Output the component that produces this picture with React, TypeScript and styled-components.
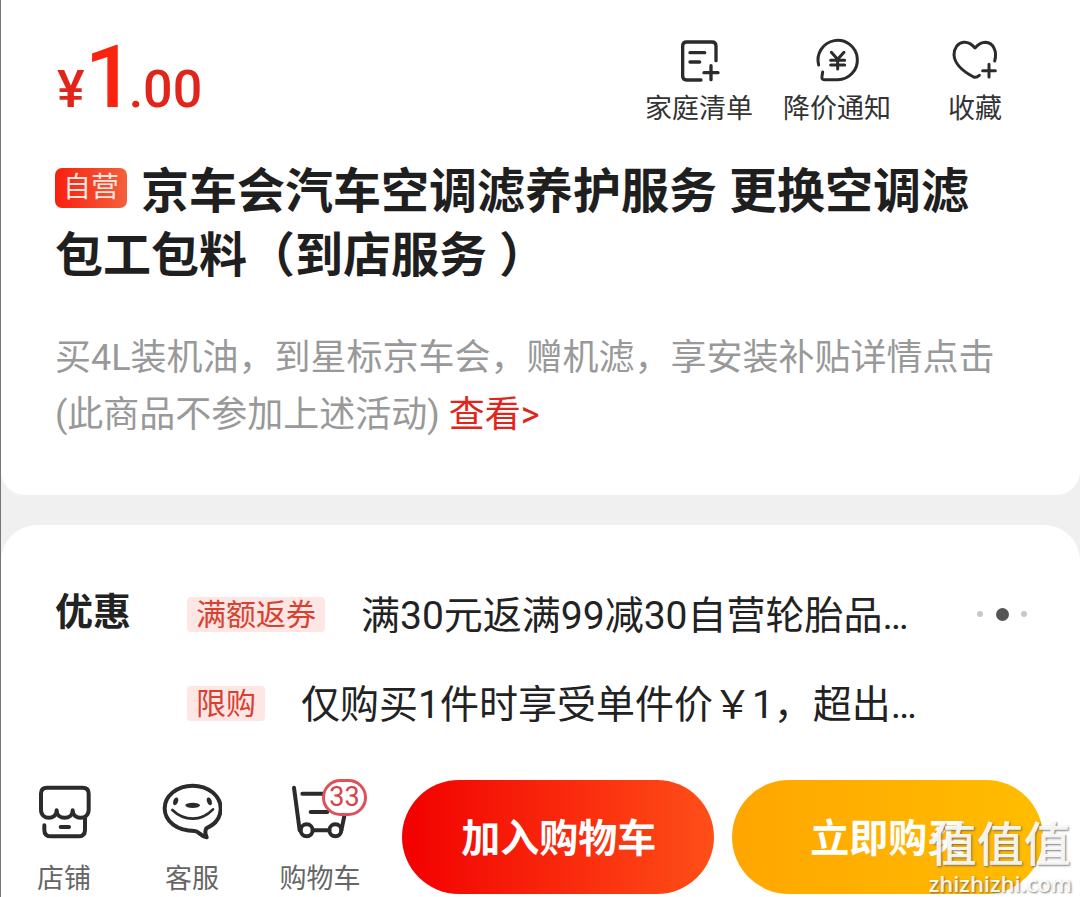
import React from "react";
import styled, { createGlobalStyle } from "styled-components";

const GlobalStyle = createGlobalStyle`
  * { box-sizing: border-box; }
  body {
    margin: 0;
    background: #f0f0f0;
    color: #222;
    font-family: Roboto, "Noto Sans CJK SC", sans-serif;
  }
  button { font-family: inherit; border: 0; padding: 0; cursor: pointer; }
`;

const Page = styled.div`
  position: relative;
  display: flex;
  flex-direction: column;
  gap: 30px;
  border-left: 1px solid #777;
`;

const ProductCard = styled.section`
  padding: 33px 36px 51px 54px;
  background: #fff;
  border-radius: 0 0 24px 24px;
`;

const CardHeader = styled.header`
  display: flex;
  justify-content: space-between;
  align-items: flex-start;
  height: 94px;
`;

const Price = styled.div`
  padding-left: 2px;
  color: #e1251b;
  font-size: 52px;
  font-weight: 500;
  line-height: 88px;
  white-space: nowrap;
`;

const PriceWhole = styled.strong`
  margin-right: -6px;
  color: #fa230f;
  font-size: 88px;
  font-weight: 500;
`;

const Actions = styled.div`
  display: flex;
  padding-top: 4px;
`;

const Action = styled.button`
  display: flex;
  flex-direction: column;
  align-items: center;
  gap: 6px;
  width: 138px;
  background: none;
  color: #333;
  font-size: 27px;
  line-height: 36px;
  white-space: nowrap;
`;

const LineIcon = styled.svg<{ $size: number }>`
  display: block;
  width: ${(p) => p.$size}px;
  height: ${(p) => p.$size}px;
  fill: none;
  stroke: #2b2b2b;
  stroke-linecap: round;
  stroke-linejoin: round;
`;

const Title = styled.h1`
  margin: 33px 0 0;
  color: #1f1f1f;
  font-size: 48px;
  font-weight: 700;
  line-height: 64px;
`;

const SelfTag = styled.span`
  display: inline-flex;
  align-items: center;
  justify-content: center;
  width: 72px;
  height: 40px;
  margin-right: 14px;
  border-radius: 7px;
  background: linear-gradient(90deg, #f8200f, #f5603c);
  color: #ffe6e0;
  font-size: 28px;
  font-weight: 400;
  line-height: 40px;
  vertical-align: 11px;
`;

const Subtitle = styled.p`
  margin: 42px 18px 0 0;
  color: #999;
  font-size: 36px;
  line-height: 57px;
`;

const MoreLink = styled.a`
  color: #e1251b;
  text-decoration: none;
`;

const PromoCard = styled.section`
  background: #fff;
  border-radius: 36px 36px 0 0;
`;

const Promotions = styled.div`
  display: flex;
  align-items: flex-start;
  padding: 61px 53px 0 54px;
`;

const PromoHeading = styled.h2`
  flex: none;
  width: 132px;
  margin: 0;
  font-size: 38px;
  font-weight: 700;
  line-height: 52px;
`;

const PromoList = styled.ul`
  display: flex;
  flex: 1;
  flex-direction: column;
  gap: 33px;
  margin: 0;
  padding: 0;
  list-style: none;
`;

const PromoRow = styled.li`
  display: flex;
  align-items: center;
  gap: 36px;
  height: 56px;
  font-size: 39px;
  line-height: 52px;
  white-space: nowrap;
`;

const PromoTag = styled.span`
  padding: 0 9px;
  border-radius: 4px;
  background: #fde6e4;
  color: #d9402f;
  font-size: 30px;
  line-height: 35px;
`;

const PromoText = styled.span`
  padding-top: 3px;
`;

const MoreButton = styled.button`
  display: flex;
  align-items: center;
  justify-content: space-between;
  width: 50px;
  height: 56px;
  background: none;
`;

const Dot = styled.span<{ $active?: boolean }>`
  width: ${(p) => (p.$active ? 13 : 6)}px;
  height: ${(p) => (p.$active ? 13 : 6)}px;
  border-radius: 50%;
  background: ${(p) => (p.$active ? "#555" : "#c8c8c8")};
`;

const BottomBar = styled.footer`
  display: flex;
  align-items: flex-start;
  padding: 49px 37px 2px 0;
`;

const Nav = styled.nav`
  display: flex;
  flex: none;
`;

const NavItem = styled.a`
  display: flex;
  flex-direction: column;
  align-items: center;
  gap: 20px;
  width: 128px;
  padding: 1px 2px 0 0;
  color: #666;
  font-size: 27px;
  line-height: 36px;
  text-decoration: none;
`;

const IconBox = styled.span`
  position: relative;
`;

const Badge = styled.span`
  position: absolute;
  left: 32px;
  top: -2px;
  width: 45px;
  height: 37px;
  border: 3px solid #e0505a;
  border-radius: 19px;
  background: #fff;
  color: #d8434b;
  font-size: 27px;
  line-height: 31px;
  text-align: center;
`;

const BuyButtons = styled.div`
  display: flex;
  flex: 1;
  gap: 18px;
  padding-left: 17px;
`;

const BuyButton = styled.button<{ $from: string; $to: string }>`
  flex: 1;
  height: 114px;
  padding: 0 0 5px 2px;
  border-radius: 57px;
  background: linear-gradient(90deg, ${(p) => p.$from}, ${(p) => p.$to});
  color: #fff;
  font-size: 39px;
  font-weight: 700;
`;

const Watermark = styled.div`
  position: absolute;
  right: 8px;
  bottom: 3px;
  color: rgba(255, 255, 255, 0.92);
  text-align: center;
  text-shadow: 1px 1px 2px rgba(90, 90, 90, 0.8);
  pointer-events: none;
`;

const WatermarkName = styled.div`
  font-size: 47px;
  font-weight: 500;
  line-height: 50px;
`;

const WatermarkSite = styled.div`
  font-family: "Open Sans", sans-serif;
  font-size: 22px;
  font-weight: 600;
  line-height: 26px;
`;

const ListIcon = () => (
  <LineIcon $size={48} viewBox="0 0 144 144" strokeWidth={10} aria-hidden>
    <path d="M123 71V27q0-12-12-12H35q-12 0-12 12v90q0 12 12 12h43" />
    <path d="M45 47h44M45 75h29M108 86v42M87 107h42" />
  </LineIcon>
);

const PriceAlertIcon = () => (
  <LineIcon $size={48} viewBox="0 0 144 144" strokeWidth={9} aria-hidden>
    <path d="M17 84A59 59 0 1 1 74 128H34q-9 0-7-10l2-13" />
    <path d="M55 46l19 21 19-21M74 67v29M53 70h42M53 84h42" />
  </LineIcon>
);

const HeartIcon = () => (
  <LineIcon $size={48} viewBox="0 0 144 144" strokeWidth={9} aria-hidden>
    <path d="M131 72C139 44 128 17 103 16 88 16 80 24 72 33 62 21 50 15 38 16 20 18 9 34 9 54c2 30 36 54 59 66q8 3 17-5" />
    <path d="M114 82v38M95 101h38" />
  </LineIcon>
);

const ShopIcon = () => (
  <LineIcon $size={60} viewBox="0 0 180 180" strokeWidth={12} aria-hidden>
    <path d="M21 86V38q0-18 18-18h107q18 0 18 18v48c0 32-48 32-48 2 0 30-48 30-48 0 0 30-47 30-47-2z" />
    <path d="M153 108v38q0 20-20 20H51q-20 0-20-20v-13" />
    <path d="M80 138h25" />
  </LineIcon>
);

const ServiceIcon = () => (
  <LineIcon $size={60} viewBox="0 0 180 180" strokeWidth={12} aria-hidden>
    <path d="M133 142c27-12 43-34 43-60 0-38-38-68-84-68S8 44 8 82c0 40 38 68 90 68 12 0 18 16 36 19-4-9-6-19-1-27z" />
    <path d="M31 87q27 26 61 26t61-28" strokeWidth={8} />
    <g fill="#2b2b2b" stroke="none">
      <ellipse cx="41" cy="61" rx="7" ry="12" transform="rotate(18 41 61)" />
      <ellipse cx="142" cy="61" rx="7" ry="12" transform="rotate(-18 142 61)" />
      <ellipse cx="92" cy="73" rx="22" ry="8" />
    </g>
  </LineIcon>
);

const CartIcon = () => (
  <LineIcon $size={60} viewBox="0 0 180 180" strokeWidth={12} aria-hidden>
    <path d="M12 20l17 128M68 148h50M37 38h65M62 93h50M163 105l-9 43" />
    <circle cx="50" cy="148" r="18" />
    <circle cx="136" cy="148" r="18" />
  </LineIcon>
);

const promos = [
  { tag: "满额返券", text: "满30元返满99减30自营轮胎品…" },
  { tag: "限购", text: "仅购买1件时享受单件价￥1，超出…" },
];

export default function App() {
  return (
    <>
      <GlobalStyle />
      <Page>
        <ProductCard>
          <CardHeader>
            <Price>
              ¥<PriceWhole>1</PriceWhole>.00
            </Price>
            <Actions>
              <Action type="button"><ListIcon />家庭清单</Action>
              <Action type="button"><PriceAlertIcon />降价通知</Action>
              <Action type="button"><HeartIcon />收藏</Action>
            </Actions>
          </CardHeader>
          <Title>
            <SelfTag>自营</SelfTag>
            京车会汽车空调滤养护服务 更换空调滤
            <br />
            包工包料（到店服务 ）
          </Title>
          <Subtitle>
            买4L装机油，到星标京车会，赠机滤，享安装补贴详情点击
            <br />
            (此商品不参加上述活动) <MoreLink href="#activity">查看&gt;</MoreLink>
          </Subtitle>
        </ProductCard>

        <PromoCard>
          <Promotions>
            <PromoHeading>优惠</PromoHeading>
            <PromoList>
              {promos.map((p) => (
                <PromoRow key={p.tag}>
                  <PromoTag>{p.tag}</PromoTag>
                  <PromoText>{p.text}</PromoText>
                </PromoRow>
              ))}
            </PromoList>
            <MoreButton type="button" aria-label="更多优惠">
              <Dot />
              <Dot $active />
              <Dot />
            </MoreButton>
          </Promotions>

          <BottomBar>
            <Nav>
              <NavItem href="#shop"><ShopIcon />店铺</NavItem>
              <NavItem href="#service"><ServiceIcon />客服</NavItem>
              <NavItem href="#cart">
                <IconBox>
                  <CartIcon />
                  <Badge>33</Badge>
                </IconBox>
                购物车
              </NavItem>
            </Nav>
            <BuyButtons>
              <BuyButton type="button" $from="#f20000" $to="#ff4f18">加入购物车</BuyButton>
              <BuyButton type="button" $from="#ffa600" $to="#ffbd00">立即购买</BuyButton>
            </BuyButtons>
          </BottomBar>
        </PromoCard>

        <Watermark>
          <WatermarkName>值值值</WatermarkName>
          <WatermarkSite>zhizhizhi.com</WatermarkSite>
        </Watermark>
      </Page>
    </>
  );
}
